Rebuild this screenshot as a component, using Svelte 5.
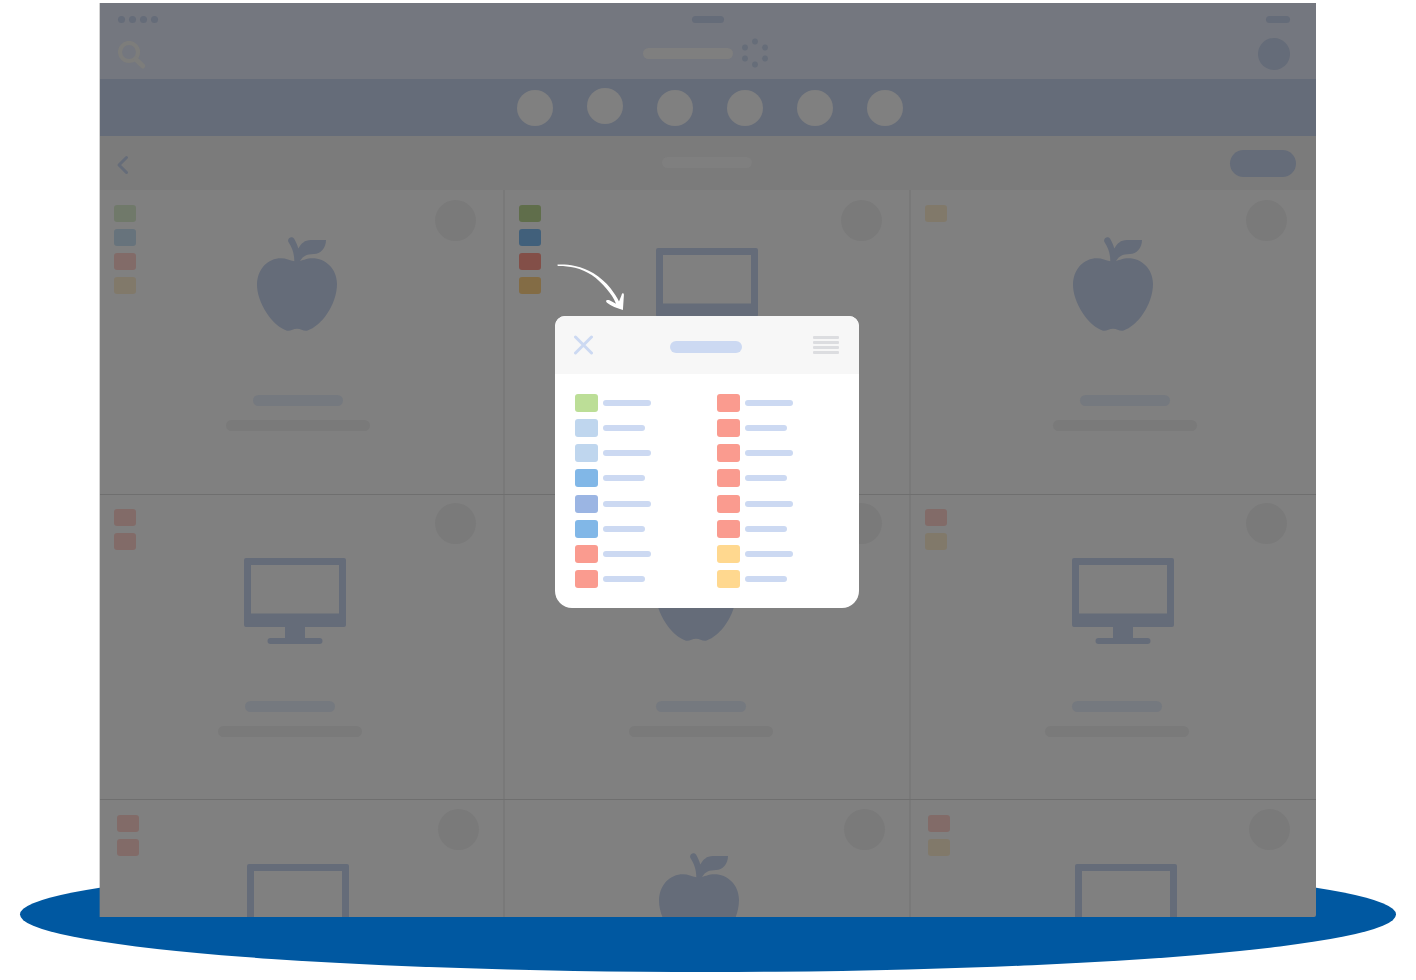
<script>
  const green = '#70796a', blue = '#67737c', red = '#826b68', sand = '#81796a';

  // shift values move the artwork and its caption off the card's centre line
  const rows = [
    { name: 'first', cards: [
      { icon: 'apple', tags: [green, blue, red, sand], art: -5, caption: -4 },
      { icon: 'monitor', tags: ['#606e4b', '#41607b', '#834f48', '#836c45'], art: 0, caption: 0 },
      { icon: 'apple', tags: [sand], art: 1, caption: 13 }
    ] },
    { name: 'second', cards: [
      { icon: 'monitor', tags: [red, red], art: -7, caption: -12 },
      { icon: 'apple', tags: [], art: -11, caption: -6 },
      { icon: 'monitor', tags: [red, sand], art: 11, caption: 5 }
    ] },
    { name: 'third', cards: [
      { icon: 'monitor', tags: [red, red], art: -4, caption: 0 },
      { icon: 'apple', tags: [], art: -8, caption: 0 },
      { icon: 'monitor', tags: [red, sand], art: 14, caption: 0 }
    ] }
  ];

  const coral = '#fa9b8f', amber = '#ffd88f', sky = '#bfd6ee', azure = '#81b7e7';
  const lists = [
    ['#bcde97', sky, sky, azure, '#9bb5e3', azure, coral, coral],
    [coral, coral, coral, coral, coral, coral, amber, amber]
  ];
</script>

<main class="stage">
  <div class="shadow"></div>
  <div class="tablet">
    <header class="top">
      <div class="status">
        <span class="dots"><i></i><i></i><i></i><i></i></span>
        <span class="mark"></span>
        <span class="battery"></span>
      </div>
      <div class="heading">
        <button class="search" aria-label="Search">
          <svg width="30" height="30" viewBox="0 0 30 30" fill="none" stroke="#7d7d7b" stroke-linecap="round">
            <circle cx="11" cy="11" r="9" stroke-width="4.200" />
            <path d="M18 18.500L24.800 25" stroke-width="5" />
          </svg>
        </button>
        <div class="brand">
          <span class="name"></span>
          <svg width="28" height="30" viewBox="0 0 28 30" fill="#666d79">
            <circle cx="14" cy="3.500" r="2.900" /><circle cx="24" cy="9.500" r="2.900" />
            <circle cx="24" cy="20.500" r="2.900" /><circle cx="14" cy="26.500" r="2.900" />
            <circle cx="4" cy="20.500" r="2.900" /><circle cx="4" cy="9.500" r="2.900" />
          </svg>
        </div>
        <button class="avatar" aria-label="Account"></button>
      </div>
    </header>

    <nav class="tabs">
      {#each [1, 2, 3, 4, 5, 6] as tab}
        <button class="tab" class:raised={tab === 2} aria-label="Tab {tab}"></button>
      {/each}
    </nav>

    <div class="toolbar">
      <button class="back" aria-label="Back">
        <svg width="14" height="20" viewBox="0 0 14 20" fill="none" stroke="#656c79" stroke-width="3" stroke-linecap="round" stroke-linejoin="round">
          <path d="M10.500 2.500L3 10L10.500 17.500" />
        </svg>
      </button>
      <span class="title"></span>
      <button class="action" aria-label="Action"></button>
    </div>

    <section class="grid">
      {#each rows as row}
        <div class="row {row.name}">
          {#each row.cards as card}
            <article class="card">
              <div class="tags">
                {#each card.tags as tag}<span class="tag" style:background={tag}></span>{/each}
              </div>
              <span class="badge"></span>
              <div class="body">
                <div class="art" style:margin-left="{card.art * 2}px">
                  {#if card.icon === 'apple'}
                    <svg width="80" height="94" viewBox="0 0 80 94" fill="#656c79">
                      <path d="M24 21.300C29 21.300 33 23.500 37.300 24.300C37.300 16.500 35.200 11 31.600 5.200C29.500 1.500 34.500-1.800 37 1.600C38.700 4.500 40.300 8 41.300 11.500C44.300 6.500 47.500 3 54 3H69C69 11 63.500 17 57 17C50 17.200 46.500 18.500 43 24C47 23 50 21.300 55.500 21.300C68 21.300 80 31.500 80 47C80 67 65 89 50 93.700C46 94.200 44 91.700 40 91.700C36 91.700 34 94.200 30 93.700C15 89 0 65 0 48C0 32 11 21.300 24 21.300Z" />
                    </svg>
                  {:else}
                    <svg class="monitor" width="102" height="86" viewBox="0 0 102 86" fill="#656c79">
                      <path fill-rule="evenodd" d="M2 0H100Q102 0 102 2V67Q102 69 100 69H61V80H75.500A3 3 0 0 1 75.500 86H26.500A3 3 0 0 1 26.500 80H41V69H2Q0 69 0 67V2Q0 0 2 0ZM7 7V55.500H95V7Z" />
                    </svg>
                  {/if}
                </div>
                {#if row.name !== 'third'}
                  <div class="caption" style:margin-left="{card.caption * 2}px">
                    <span class="primary"></span>
                    <span class="secondary"></span>
                  </div>
                {/if}
              </div>
            </article>
          {/each}
        </div>
      {/each}
    </section>

    <svg class="arrow" width="70" height="48" viewBox="0 0 70 48" fill="#fff">
      <path d="M1.500 1.600C7 1.300 13 1.700 19 3C26 4.500 32 7 37.500 10.300C44 14.500 50 19.500 54.500 25.300C58 30 61 34.500 63 38.500L65.600 32C65.800 29.800 68 29.600 67.900 32L66.900 46.900C61 45.500 55 43 51 39.800C49 37.300 50.500 36.300 53.500 37.300L60 40.700C58 35.500 54.500 30.500 50.700 26C46 20.500 41.500 16 35.700 12C30.500 8.500 25 6.300 19 4.700C13 3.300 7 2.900 1.700 3Z" />
    </svg>

    <section class="dialog" role="dialog" aria-label="Categories">
      <header class="dialog-head">
        <button class="close" aria-label="Close">
          <svg width="20" height="20" viewBox="0 0 20 20" fill="none" stroke="#ccd9f2" stroke-width="3" stroke-linecap="round">
            <path d="M2.500 2L18.500 18M18.500 2L2.500 18" />
          </svg>
        </button>
        <span class="dialog-title"></span>
        <button class="menu" aria-label="Menu"><i></i><i></i><i></i><i></i></button>
      </header>
      <div class="lists">
        {#each lists as list}
          <ul>
            {#each list as colour, i}
              <li><span class="swatch" style:background={colour}></span><span class="label" class:short={i % 2 === 1}></span></li>
            {/each}
          </ul>
        {/each}
      </div>
    </section>
  </div>
</main>

<style>
  :global(body) { margin: 0; background: #fff; font-family: "Liberation Sans", Arial, sans-serif; }
  * { box-sizing: border-box; }
  button { padding: 0; border: 0; background: none; display: block; }
  svg { display: block; }

  .stage { position: relative; padding: 3px 100px 63px; }
  .shadow { position: absolute; left: 20px; right: 20px; bottom: 8px; height: 115px; border-radius: 50%; background: #0058a1; }
  .tablet { position: relative; background: #808080; border-radius: 0 0 2px 0; box-shadow: -1px 0 rgba(128, 128, 128, 0.35); overflow: hidden; }

  .top { height: 76px; background: #74777f; padding: 12px 26px 0 18px; }
  .status, .heading, .toolbar { display: grid; grid-template-columns: 1fr auto 1fr; }
  .status { height: 8px; align-items: center; }
  .dots { display: flex; gap: 4px; }
  .dots i { width: 7px; height: 7px; border-radius: 50%; background: #656c79; }
  .mark { width: 32px; height: 7px; margin-left: 8px; border-radius: 4px; background: #656c79; }
  .battery { width: 24px; height: 7px; border-radius: 4px; background: #656c79; justify-self: end; }
  .heading { height: 32px; margin-top: 14px; align-items: center; }
  .search { margin-top: 4px; }
  .brand { display: flex; align-items: center; gap: 8px; margin: 0 0 2px 4px; }
  .name { width: 90px; height: 11px; border-radius: 6px; background: #7f7f7f; }
  .avatar { width: 32px; height: 32px; border-radius: 50%; background: #656c79; justify-self: end; }

  .tabs { height: 57px; padding-left: 4px; background: #656c79; display: flex; align-items: center; justify-content: center; gap: 34px; }
  .tab { width: 36px; height: 36px; border-radius: 50%; background: #808080; }
  .raised { margin-bottom: 4px; }

  .toolbar { height: 54px; padding: 0 20px 0 16px; background: #7b7b7b; align-items: center; }
  .back { margin-top: 4px; }
  .title { width: 90px; height: 11px; margin: 0 0 2px 2px; border-radius: 6px; background: #7f7f7f; }
  .action { width: 66px; height: 27px; border-radius: 14px; background: #656c79; justify-self: end; }

  .row { display: grid; grid-template-columns: repeat(3, 1fr); height: 305px; border-bottom: 1px solid #6f6f6f; --top: 47px; --tags: 15px; --side: 14px; --badge: 10px; --end: 27px; --art: 205px; }
  .second { --top: 52px; --tags: 14px; --badge: 8px; --art: 206px; }
  .third { --top: 53px; --side: 17px; --badge: 9px; --end: 24px; height: 117px; border-bottom: 0; overflow: hidden; }
  .card { display: grid; align-items: start; border-right: 2px solid #797979; }
  .card:last-child { border-right-color: transparent; }
  .tags, .badge, .body { grid-area: 1 / 1; }
  .tags { display: flex; flex-direction: column; gap: 7px; padding: var(--tags) 0 0 var(--side); }
  .tag { width: 22px; height: 17px; border-radius: 3px; }
  .badge { width: 41px; height: 41px; margin: var(--badge) var(--end) 0 0; border-radius: 50%; background: #7a7a7a; justify-self: end; }
  .art { display: flex; justify-content: center; height: var(--art); padding-top: var(--top); }
  .monitor { margin-top: 11px; }
  .caption { display: flex; flex-direction: column; align-items: center; gap: 14px; }
  .primary, .secondary { height: 11px; border-radius: 6px; }
  .primary { width: 90px; background: #75797f; }
  .secondary { width: 144px; background: #7a7a7a; }

  .arrow { position: absolute; left: calc(50% - 152px); top: 260px; }
  .dialog { position: absolute; left: calc(50% - 153px); top: 313px; width: 304px; border-radius: 10px 10px 17px 17px; background: #fff; overflow: hidden; }
  .dialog-head { display: grid; grid-template-columns: 1fr auto 1fr; align-items: center; height: 58px; padding: 0 20px 0 18px; background: #f7f7f7; }
  .dialog-title { width: 72px; height: 12px; margin-top: 4px; border-radius: 6px; background: #ccd9f2; }
  .menu { display: flex; flex-direction: column; gap: 2px; width: 26px; justify-self: end; }
  .menu i { height: 3px; border-radius: 1px; background: #dcdde0; }
  .lists { display: grid; grid-template-columns: 1fr 1fr; column-gap: 20px; padding: 20px; }
  ul { list-style: none; margin: 0; padding: 0; height: 194px; display: flex; flex-direction: column; justify-content: space-between; }
  li { display: flex; align-items: center; gap: 5px; }
  .swatch { width: 23px; height: 18px; border-radius: 3px; }
  .label { width: 48px; height: 6px; border-radius: 3px; background: #ccd9f2; }
  .short { width: 42px; }
</style>
